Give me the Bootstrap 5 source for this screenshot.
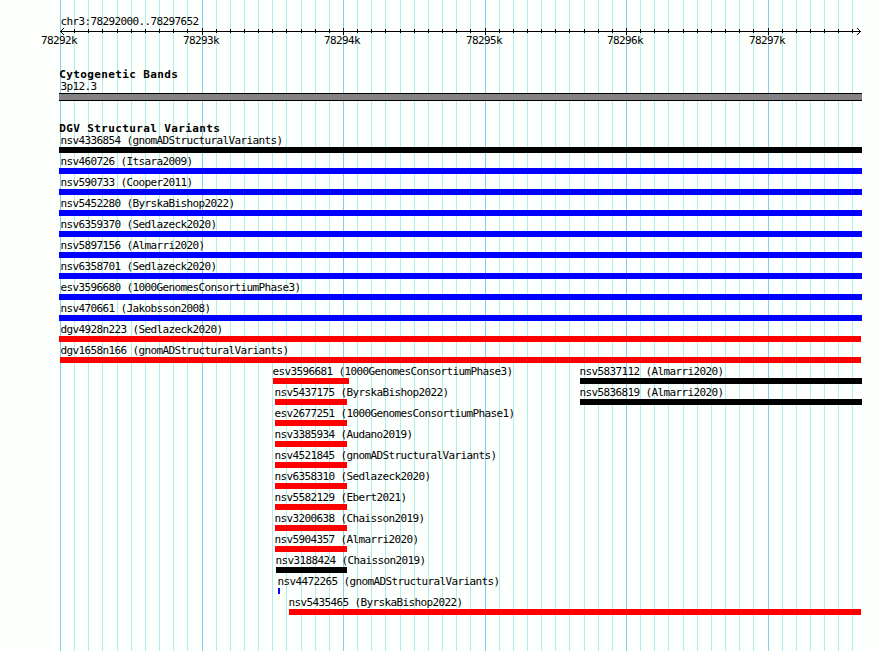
<!DOCTYPE html>
<html lang="en">
<head>
  <meta charset="UTF-8">
  <title>chr3:78292000..78297652</title>
  <meta name="viewport" content="width=device-width, initial-scale=1">
  <link href="https://cdn.jsdelivr.net/npm/bootstrap@5.3.3/dist/css/bootstrap.min.css" rel="stylesheet">
  <style>
    body {
      background: #fdfffc;
      color: #000;
      font-family: "DejaVu Sans Mono", monospace;
      font-size: 11px;
      line-height: 12px;
      letter-spacing: -0.622px;
    }
    .browser-panel { width: 890px; height: 651px; }
    .grid-lines { z-index: 0; }
    .tracks { z-index: 1; padding-top: 16px; }
    .region-name { padding-left: 60.4px; height: 12px; }
    .ruler { height: 7px; }
    .ruler-labels { height: 12px; padding-left: 41px; }
    .track-title {
      font-weight: 700;
      letter-spacing: 0.378px;
      padding-left: 59.3px;
      height: 12px;
    }
    .cyto { margin-top: 22px; }
    .cyto-name { padding-left: 60.4px; height: 12px; }
    .cyto-band {
      width: 803px;
      height: 8px;
      margin-left: 59px;
      background: #848284;
      border: solid #000;
      border-width: 1px 0;
    }
    .variants { margin-top: 22px; }
    .variant-row { height: 21px; }
    .variant-name { height: 12px; padding-left: 0.4px; }
    .variant-bar { height: 6px; }
    .gain { background: #00f; }
    .loss { background: #f00; }
    .other { background: #000; }
  </style>
</head>
<body>

  <div class="browser-panel position-relative overflow-hidden">
    <svg class="grid-lines position-absolute top-0 start-0" id="gridLines" width="890" height="651" shape-rendering="crispEdges"></svg>

    <div class="tracks position-relative d-flex flex-column">
      <!-- Ruler -->
      <div class="region-name">chr3:78292000..78297652</div>
      <svg class="ruler d-block" id="ruler" width="890" height="7" shape-rendering="crispEdges"></svg>
      <div class="ruler-labels d-flex text-nowrap" id="rulerLabels"></div>

      <!-- Cytogenetic bands -->
      <div class="cyto">
        <div class="track-title">Cytogenetic Bands</div>
        <div class="cyto-name">3p12.3</div>
        <div class="cyto-band"></div>
      </div>

      <!-- Structural variants -->
      <div class="variants">
        <div class="track-title">DGV Structural Variants</div>
        <div id="variantRows"></div>
      </div>
    </div>
  </div>

  <script src="https://cdn.jsdelivr.net/npm/bootstrap@5.3.3/dist/js/bootstrap.bundle.min.js"></script>
  <script>
    // each feature: name, type, start, end
    const rows = [
      [["nsv4336854 (gnomADStructuralVariants)", "other", 59, 862]],
      [["nsv460726 (Itsara2009)", "gain", 59, 862]],
      [["nsv590733 (Cooper2011)", "gain", 59, 862]],
      [["nsv5452280 (ByrskaBishop2022)", "gain", 59, 862]],
      [["nsv6359370 (Sedlazeck2020)", "gain", 59, 862]],
      [["nsv5897156 (Almarri2020)", "gain", 59, 862]],
      [["nsv6358701 (Sedlazeck2020)", "gain", 59, 862]],
      [["esv3596680 (1000GenomesConsortiumPhase3)", "gain", 59, 862]],
      [["nsv470661 (Jakobsson2008)", "gain", 59, 862]],
      [["dgv4928n223 (Sedlazeck2020)", "loss", 59, 861]],
      [["dgv1658n166 (gnomADStructuralVariants)", "loss", 60, 861]],
      [["esv3596681 (1000GenomesConsortiumPhase3)", "loss", 273, 349], ["nsv5837112 (Almarri2020)", "other", 580, 862]],
      [["nsv5437175 (ByrskaBishop2022)", "loss", 275, 347], ["nsv5836819 (Almarri2020)", "other", 580, 862]],
      [["esv2677251 (1000GenomesConsortiumPhase1)", "loss", 275, 347]],
      [["nsv3385934 (Audano2019)", "loss", 275, 347]],
      [["nsv4521845 (gnomADStructuralVariants)", "loss", 275, 347]],
      [["nsv6358310 (Sedlazeck2020)", "loss", 275, 347]],
      [["nsv5582129 (Ebert2021)", "loss", 275, 347]],
      [["nsv3200638 (Chaisson2019)", "loss", 275, 347]],
      [["nsv5904357 (Almarri2020)", "loss", 275, 347]],
      [["nsv3188424 (Chaisson2019)", "other", 276, 347]],
      [["nsv4472265 (gnomADStructuralVariants)", "gain", 278, 280]],
      [["nsv5435465 (ByrskaBishop2022)", "loss", 289, 861]]
    ];

    // one line per 100 bp, every tenth is a major one
    let lines = "";
    let ticks = '<path d="M60 3h801v1h-801z"/>';
    let labels = "";
    let labelEnd = 41;
    for (let i = 0; i <= 56; i++) {
      const x = Math.round(60 + i * 14.15);
      const major = i % 10 === 0;
      lines += `<rect x="${x}" y="0" width="1" height="651" fill="${major ? "#84cdee" : "#afeeea"}"/>`;
      if (i > 0) {
        ticks += major ? `<rect x="${x}" y="0" width="1" height="7"/>` : `<rect x="${x}" y="1" width="1" height="4"/>`;
      }
      if (major) {
        labels += `<span style="width:36px;margin-left:${x - 19 - labelEnd}px">${78292 + i / 10}k</span>`;
        labelEnd = x + 17;
      }
    }
    // arrow heads
    ticks += '<path d="M61 2h1v1h-1zM62 1h1v1h-1zM63 0h1v1h-1zM61 4h1v1h-1zM62 5h1v1h-1zM63 6h1v1h-1z"/>';
    ticks += '<path d="M859 2h1v1h-1zM858 1h1v1h-1zM857 0h1v1h-1zM859 4h1v1h-1zM858 5h1v1h-1zM857 6h1v1h-1z"/>';
    document.getElementById("gridLines").innerHTML = lines;
    document.getElementById("ruler").innerHTML = ticks;
    document.getElementById("rulerLabels").innerHTML = labels;

    document.getElementById("variantRows").innerHTML = rows.map(function (row) {
      let end = 0;
      const items = row.map(function ([name, type, from, to]) {
        const html = `<div class="text-nowrap" style="width:${to - from}px;margin-left:${from - end}px">
          <div class="variant-name" style="margin-left:${Math.max(60, from - 1) - from}px">${name}</div>
          <div class="variant-bar ${type}"></div>
        </div>`;
        end = to;
        return html;
      });
      return `<div class="variant-row d-flex">${items.join("")}</div>`;
    }).join("");
  </script>

</body>
</html>
